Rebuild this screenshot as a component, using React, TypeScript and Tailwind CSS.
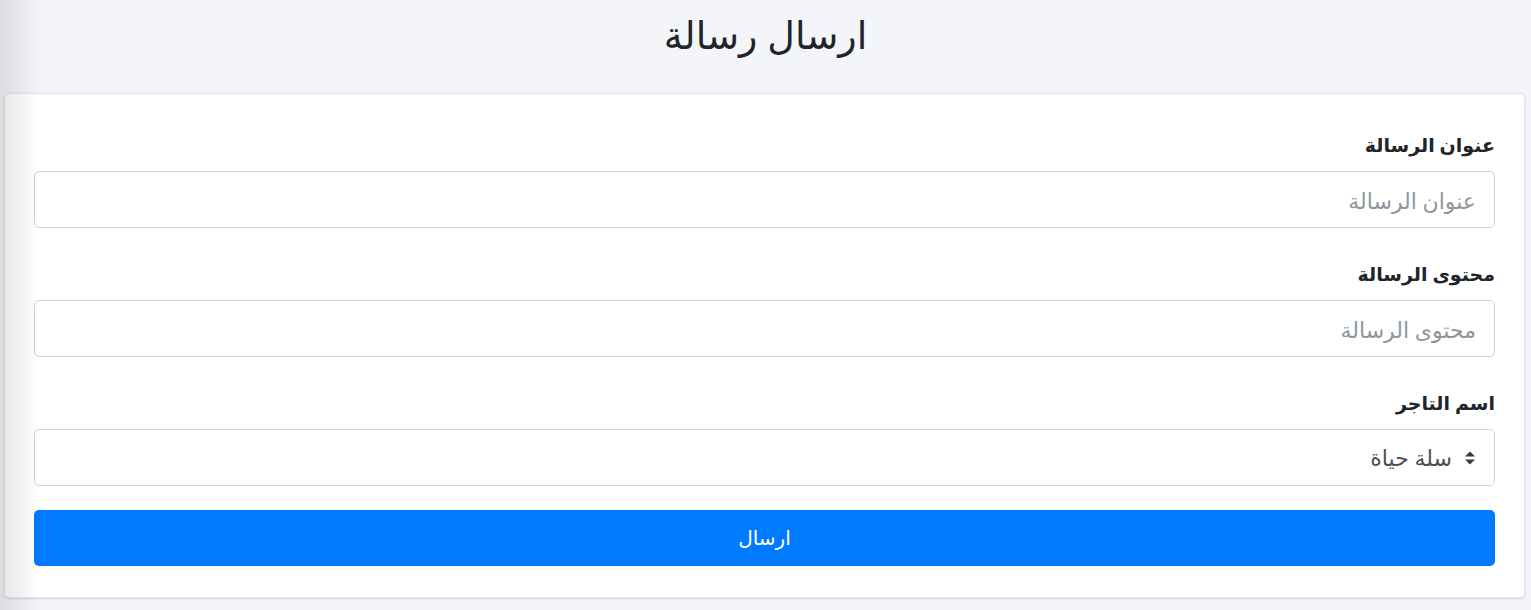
const font = { fontFamily: '"Noto Sans", "DejaVu Sans", sans-serif' };

function Field({ label, placeholder }: { label: string; placeholder: string }) {
  return (
    <div className="mb-[33px]">
      <label className="mb-[12px] block text-[19px] font-bold leading-[27px] text-[#212529]">
        {label}
      </label>
      <input
        placeholder={placeholder}
        className="h-[57px] w-full rounded-[5px] border border-[#ced4da] bg-white px-[18px] text-[22px] text-[#495057] outline-none placeholder:text-[#8f979e]"
      />
    </div>
  );
}

// bootstrap-style select arrows
function SelectArrows() {
  return (
    <svg width="12" height="16" viewBox="0 0 12 16" className="shrink-0 text-[#343a40]">
      <path d="M6 1.5 L11 6.5 H1 Z" fill="currentColor" />
      <path d="M6 14.5 L11 9.5 H1 Z" fill="currentColor" />
    </svg>
  );
}

export default function App() {
  return (
    <div dir="rtl" style={font} className="relative min-h-[610px] w-full bg-[#f4f5f9]">
      {/* left edge shade */}
      <div className="pointer-events-none absolute inset-y-0 left-0 z-10 w-[40px] bg-gradient-to-r from-black/10 to-transparent" />

      <h1 className="h-[93px] pt-[4px] text-center text-[38px] font-normal leading-[60px] text-[#212529]">
        ارسال رسالة
      </h1>

      <div className="ml-[4px] mr-[6px] rounded-[5px] border border-[#e3e5ea] bg-white pb-[31px] pl-[29px] pr-[29px] pt-[38px] shadow-[0_1px_3px_rgba(0,0,0,0.12)]">
        <Field label="عنوان الرسالة" placeholder="عنوان الرسالة" />
        <Field label="محتوى الرسالة" placeholder="محتوى الرسالة" />

        <div className="mb-[24px]">
          <label className="mb-[12px] block text-[19px] font-bold leading-[27px] text-[#212529]">
            اسم التاجر
          </label>
          <div className="flex h-[57px] w-full items-center gap-[12px] rounded-[5px] border border-[#ced4da] bg-white px-[18px] text-[22px] text-[#495057]">
            <SelectArrows />
            <span>سلة حياة</span>
          </div>
        </div>

        <button className="h-[56px] w-full rounded-[5px] bg-[#007bff] text-[20px] text-white">
          ارسال
        </button>
      </div>
    </div>
  );
}
